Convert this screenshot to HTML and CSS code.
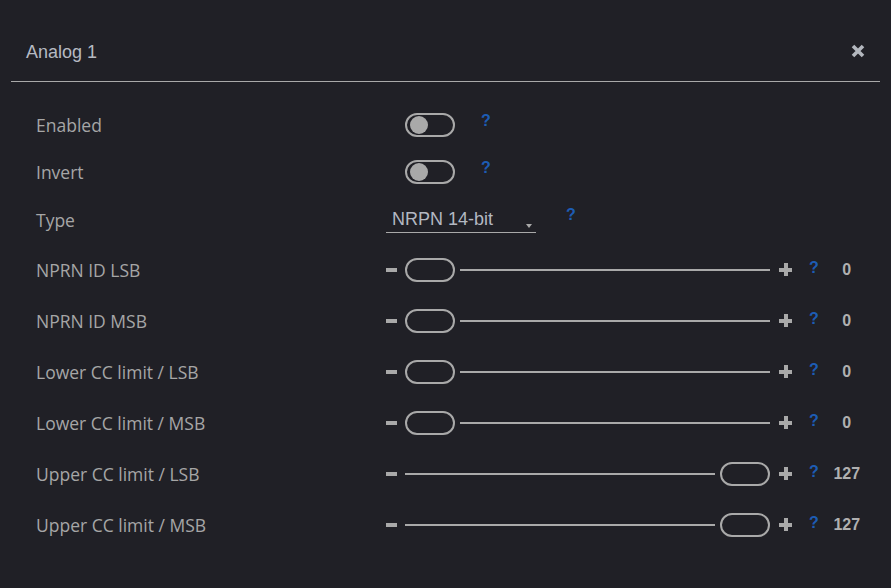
FILE: index.html
```html
<!DOCTYPE html>
<html>
<head>
<meta charset="utf-8">
<link rel="stylesheet" href="styles.css">
</head>
<body>
<div class="dialog">
  <header class="head">
    <h1 class="title">Analog 1</h1>
    <span class="close" aria-label="Close">
      <svg width="14" height="14" viewBox="0 0 14 14"><path d="M2 2 L12 12 M12 2 L2 12" stroke="#b3b7be" stroke-width="3.6" stroke-linecap="butt"/></svg>
    </span>
  </header>
  <div class="rows">
    <div class="row row-toggle">
      <span class="label">Enabled</span>
      <div class="ctrl ctrl-toggle">
        <span class="toggle"><span class="knob"></span></span>
        <span class="help help-raised">?</span>
      </div>
    </div>
    <div class="row row-toggle">
      <span class="label">Invert</span>
      <div class="ctrl ctrl-toggle">
        <span class="toggle"><span class="knob"></span></span>
        <span class="help help-raised">?</span>
      </div>
    </div>
    <div class="row row-select">
      <span class="label">Type</span>
      <div class="ctrl">
        <span class="select"><span class="select-text">NRPN 14-bit</span><span class="caret"></span></span>
        <span class="help help-select">?</span>
      </div>
    </div>
    <div class="row row-slider">
      <span class="label">NPRN ID LSB</span>
      <div class="ctrl">
        <span class="minus"></span>
        <div class="slider"><span class="thumb"></span><span class="track track-after"></span></div>
        <span class="plus"></span>
        <span class="help">?</span>
        <span class="value">0</span>
      </div>
    </div>
    <div class="row row-slider">
      <span class="label">NPRN ID MSB</span>
      <div class="ctrl">
        <span class="minus"></span>
        <div class="slider"><span class="thumb"></span><span class="track track-after"></span></div>
        <span class="plus"></span>
        <span class="help">?</span>
        <span class="value">0</span>
      </div>
    </div>
    <div class="row row-slider">
      <span class="label">Lower CC limit / LSB</span>
      <div class="ctrl">
        <span class="minus"></span>
        <div class="slider"><span class="thumb"></span><span class="track track-after"></span></div>
        <span class="plus"></span>
        <span class="help">?</span>
        <span class="value">0</span>
      </div>
    </div>
    <div class="row row-slider">
      <span class="label">Lower CC limit / MSB</span>
      <div class="ctrl">
        <span class="minus"></span>
        <div class="slider"><span class="thumb"></span><span class="track track-after"></span></div>
        <span class="plus"></span>
        <span class="help">?</span>
        <span class="value">0</span>
      </div>
    </div>
    <div class="row row-slider">
      <span class="label">Upper CC limit / LSB</span>
      <div class="ctrl">
        <span class="minus"></span>
        <div class="slider"><span class="track track-before"></span><span class="thumb"></span></div>
        <span class="plus"></span>
        <span class="help">?</span>
        <span class="value">127</span>
      </div>
    </div>
    <div class="row row-slider">
      <span class="label">Upper CC limit / MSB</span>
      <div class="ctrl">
        <span class="minus"></span>
        <div class="slider"><span class="track track-before"></span><span class="thumb"></span></div>
        <span class="plus"></span>
        <span class="help">?</span>
        <span class="value">127</span>
      </div>
    </div>
  </div>
</div>
</body>
</html>
```

FILE: styles.css
```css
* { box-sizing: border-box; }
html, body {
  margin: 0;
  padding: 0;
  background: #202026;
  height: 100%;
  overflow: hidden;
}
body {
  font-family: "Liberation Sans", Arial, sans-serif;
  color: #aaaaaa;
}
.dialog {
  width: 891px;
  height: 588px;
  background: #202026;
}
.head {
  display: flex;
  align-items: center;
  justify-content: space-between;
  box-sizing: content-box;
  height: 58px;
  padding: 23px 15px 0 15px;
  margin: 0 11px;
  border-bottom: 1px solid #a9a9a9;
}
.title {
  margin: 0;
  font-size: 18px;
  font-weight: 400;
  color: #b6bac2;
}
.close {
  display: flex;
  width: 14px;
  height: 14px;
  position: relative;
  top: -1px;
}
.rows {
  padding: 19px 0 0 36px;
}
.row {
  display: grid;
  grid-template-columns: 350px 1fr;
  align-items: center;
}
.row-toggle { height: 47px; }
.row-select { height: 49px; }
.row-slider { height: 51px; }
.label {
  font-family: "Open Sans", sans-serif;
  font-size: 17.5px;
  color: #a6a6a6;
}
.ctrl {
  display: flex;
  align-items: center;
}
.ctrl-toggle { padding-left: 19px; }
.toggle {
  display: flex;
  align-items: center;
  width: 50px;
  height: 24px;
  border: 2px solid #a9a9a9;
  border-radius: 12px;
  padding-left: 3px;
}
.knob {
  width: 18px;
  height: 18px;
  border-radius: 50%;
  background: #a9a9a9;
}
.help {
  font-family: "Liberation Sans", Arial, sans-serif;
  font-weight: 700;
  font-size: 16px;
  color: #1d5cb4;
  position: relative;
  top: -2px;
}
.ctrl-toggle .help { margin-left: 26px; top: -4px; }
.select {
  position: relative;
  display: flex;
  align-items: center;
  width: 150px;
  height: 26px;
  border-bottom: 1px solid #a9a9a9;
  padding-left: 6px;
}
.select-text {
  font-size: 18px;
  color: #b3b8c2;
}
.caret {
  position: absolute;
  right: 4px;
  bottom: 4px;
  width: 0;
  height: 0;
  border-left: 3px solid transparent;
  border-right: 3px solid transparent;
  border-top: 4px solid #a9a9a9;
}
.help-select { margin-left: 30px; top: -5px; }
.minus {
  width: 11px;
  height: 4px;
  background: #a9a9a9;
}
.slider {
  display: flex;
  align-items: center;
  width: 365px;
  margin-left: 8px;
}
.thumb {
  flex: none;
  width: 50px;
  height: 24px;
  border: 2px solid #a9a9a9;
  border-radius: 12px;
}
.track {
  flex: 1;
  height: 2px;
  background: #a9a9a9;
}
.track-after { margin-left: 5px; }
.track-before { margin-right: 5px; }
.plus {
  position: relative;
  width: 13px;
  height: 13px;
  margin-left: 9px;
}
.plus::before, .plus::after {
  content: "";
  position: absolute;
  background: #a9a9a9;
}
.plus::before { left: 0; top: 4.5px; width: 13px; height: 4px; }
.plus::after { left: 4.5px; top: 0; width: 4px; height: 13px; }
.row-slider .help { margin-left: 17px; }
.value {
  width: 44px;
  margin-left: 6px;
  text-align: center;
  font-weight: 700;
  font-size: 16px;
  color: #b0b0b0;
}
```
